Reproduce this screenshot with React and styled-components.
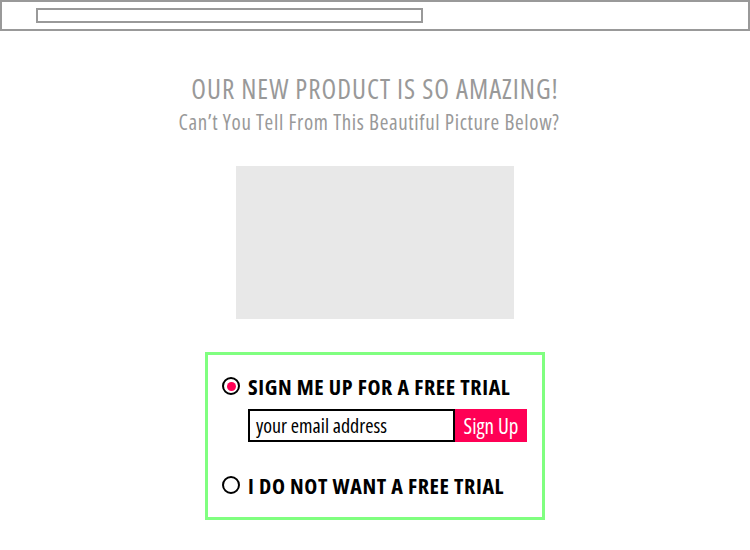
import React from "react";
import styled, { createGlobalStyle } from "styled-components";

const GlobalStyle = createGlobalStyle`
  html, body { margin: 0; padding: 0; background: #fff; }
  body { font-family: "Open Sans", "Noto Sans", sans-serif; font-stretch: condensed; }
  * { box-sizing: border-box; }
`;

const Page = styled.div`
  width: 750px;
  height: 550px;
  display: flex;
  flex-direction: column;
  align-items: center;
`;

const TopBar = styled.div`
  align-self: stretch;
  height: 31px;
  border: 2px solid #999;
  padding: 6px 0 0 34px;
`;

const AddressBox = styled.div`
  width: 387px;
  height: 15px;
  border: 2px solid #999;
`;

const Heading = styled.h1`
  margin: 41px 0 0;
  font-size: 27px;
  line-height: 34px;
  font-weight: 400;
  color: #999;
  letter-spacing: 1px;
`;

const SubHeading = styled.h2`
  margin: 3px 0 0;
  padding-right: 12px;
  font-size: 21px;
  line-height: 26px;
  font-weight: 400;
  color: #999;
  letter-spacing: 0.65px;
`;

const Picture = styled.div`
  margin-top: 31px;
  width: 278px;
  height: 153px;
  background: #e8e8e8;
`;

const FormBox = styled.form`
  margin-top: 33px;
  width: 340px;
  height: 168px;
  border: 3px solid #80ff80;
  padding: 17px 0 0 14px;
  display: flex;
  flex-direction: column;
`;

const Option = styled.label`
  display: flex;
  align-items: center;
  gap: 8px;
  height: 28px;
  font-size: 22px;
  font-weight: 700;
  color: #000;
  letter-spacing: 0.6px;
  margin-top: ${p => p.$gap || 0}px;
`;

const Radio = styled.span`
  width: 18px;
  height: 18px;
  border: 2px solid #000;
  border-radius: 50%;
  display: flex;
  align-items: center;
  justify-content: center;
  flex-shrink: 0;
  &::after {
    content: "";
    width: 9px;
    height: 9px;
    border-radius: 50%;
    background: ${p => (p.$checked ? "#ff0055" : "transparent")};
  }
`;

const SignupRow = styled.div`
  display: flex;
  margin: 9px 0 0 26px;
  height: 33px;
`;

const EmailInput = styled.div`
  width: 207px;
  height: 33px;
  border: 2px solid #000;
  padding: 0 0 0 6px;
  display: flex;
  align-items: center;
  font-size: 20px;
  color: #000;
`;

const SignUpButton = styled.div`
  width: 72px;
  height: 33px;
  background: #ff0055;
  color: #fff;
  font-size: 21px;
  display: flex;
  align-items: center;
  justify-content: center;
`;

export default function App() {
  return (
    <Page>
      <GlobalStyle />
      <TopBar>
        <AddressBox />
      </TopBar>
      <Heading>OUR NEW PRODUCT IS SO AMAZING!</Heading>
      <SubHeading>Can’t You Tell From This Beautiful Picture Below?</SubHeading>
      <Picture />
      <FormBox>
        <Option>
          <Radio $checked />
          SIGN ME UP FOR A FREE TRIAL
        </Option>
        <SignupRow>
          <EmailInput>your email address</EmailInput>
          <SignUpButton>Sign Up</SignUpButton>
        </SignupRow>
        <Option $gap={29}>
          <Radio />
          I DO NOT WANT A FREE TRIAL
        </Option>
      </FormBox>
    </Page>
  );
}
